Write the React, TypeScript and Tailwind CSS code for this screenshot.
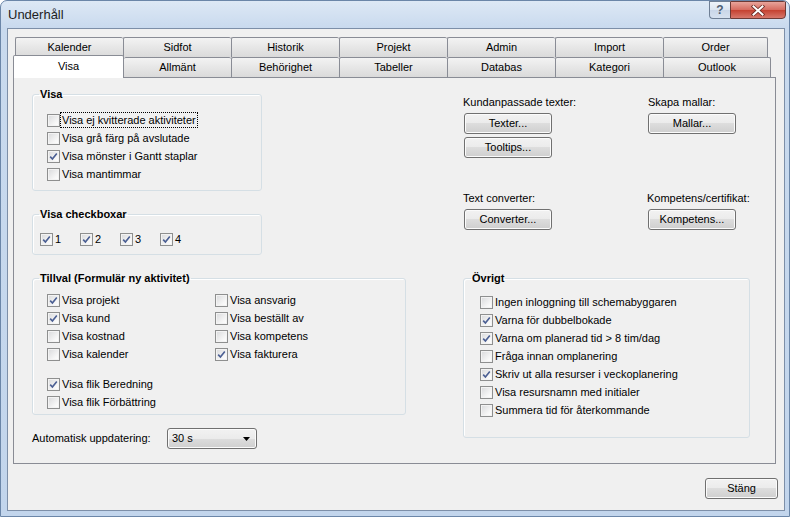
import React from "react";

const btn =
  "h-[21px] border border-[#707070] rounded-[3px] bg-[linear-gradient(#f2f2f2_0%,#ebebeb_50%,#dddddd_50%,#cfcfcf_100%)] shadow-[inset_0_0_0_1px_#fbfbfb] flex items-center justify-center leading-[13px]";

const tabCls =
  "h-[20px] border-t border-l border-[#898c95] rounded-t-[2px] bg-[linear-gradient(#f3f3f3,#dadada)] flex items-center justify-center leading-[13px]";

function Check({ label, checked, focus }: { label: string; checked?: boolean; focus?: boolean }) {
  return (
    <div className="flex items-center h-[18px]">
      <span className="w-[13px] h-[13px] shrink-0 border border-[#8e8f8f] bg-[linear-gradient(135deg,#d8d9db,#f7f7f7_70%,#ffffff)] shadow-[inset_0_0_0_1px_#f3f3f3] flex items-center justify-center">
        {checked && (
          <svg width="9" height="9" viewBox="0 0 9 9">
            <path d="M1.2 4.6 L3.4 7 L7.8 1.4" stroke="#4b5f93" strokeWidth="1.6" fill="none" />
          </svg>
        )}
      </span>
      <span
        className={
          focus
            ? "ml-[1px] px-[1px] leading-[14px] outline outline-1 outline-dotted outline-black"
            : "ml-[1px] px-[1px] leading-[14px]"
        }
      >
        {label}
      </span>
    </div>
  );
}

export default function App() {
  const row1 = [
    { t: "Kalender", w: "w-[108px]" },
    { t: "Sidfot", w: "w-[108px]" },
    { t: "Historik", w: "w-[108px]" },
    { t: "Projekt", w: "w-[108px]" },
    { t: "Admin", w: "w-[108px]" },
    { t: "Import", w: "w-[108px]" },
    { t: "Order", w: "w-[105px]" },
  ];
  const row2 = ["Allmänt", "Behörighet", "Tabeller", "Databas", "Kategori", "Outlook"];

  return (
    <div className="w-[790px] h-[517px] font-['Liberation_Sans',Arial,sans-serif] text-[11px] text-black bg-[linear-gradient(180deg,#dde8f5_0px,#c9daee_27px,#c2d5ec_100%)] rounded-t-[7px] border border-[#6b86a8] flex flex-col overflow-hidden">
      {/* Title bar */}
      <div className="h-[27px] flex items-start shrink-0">
        <div className="flex-1 pl-[7px] pt-[6px] text-[13px] leading-[15px] text-[#1e1e1e]">Underhåll</div>
        <div className="flex mr-[3px]">
          <div className="w-[21px] h-[18px] border border-[#6f7f95] border-r-0 rounded-bl-[4px] bg-[linear-gradient(#eef3f9,#dbe4f0_50%,#c9d6e8_50%,#d6e1ef)] flex items-center justify-center text-[12px] font-bold text-[#4e5d72] leading-none">
            ?
          </div>
          <div className="w-[56px] h-[18px] border border-[#6e3a36] rounded-br-[4px] bg-[linear-gradient(#e8a49b,#d66a5e_50%,#c4402f_50%,#d7776b)] flex items-center justify-center">
            <svg width="14" height="11" viewBox="0 0 14 11">
              <path d="M2.5 1.5 L11.5 9.5 M11.5 1.5 L2.5 9.5" stroke="#6b2a24" strokeWidth="3.6" strokeLinecap="square" />
              <path d="M2.5 1.5 L11.5 9.5 M11.5 1.5 L2.5 9.5" stroke="#ffffff" strokeWidth="2" strokeLinecap="square" />
            </svg>
          </div>
        </div>
      </div>

      {/* Client area */}
      <div className="ml-[6px] mr-[4px] h-[483px] border border-[#7d8fa8] bg-[#f0f0f0] flex flex-col">
        <div className="pl-[5px] pt-[8px]">
          {/* back tab row */}
          <div className="ml-[2px] flex">
            {row1.map((t, i) => (
              <div key={t.t} className={`${tabCls} ${t.w} ${i === row1.length - 1 ? "border-r" : ""}`}>
                {t.t}
              </div>
            ))}
          </div>
          {/* front tab row */}
          <div className="flex items-end h-[20px]">
            <div className="relative z-10 w-[111px] h-[23px] -mb-[1px] border-t border-l border-r border-[#898c95] rounded-t-[2px] bg-white flex items-start justify-center pt-[4px] leading-[13px]">
              Visa
            </div>
            {row2.map((t, i) => (
              <div
                key={t}
                className={`${tabCls} ${i === 0 ? "w-[107px] border-l-0" : "w-[108px]"} ${i === row2.length - 1 ? "border-r" : ""}`}
              >
                {t}
              </div>
            ))}
          </div>

          {/* Tab page */}
          <div className="w-[763px] h-[387px] border border-[#898c95] bg-[#f0f0f0] flex">
            {/* left column */}
            <div className="w-[449px] pl-[18px] pt-[10px] flex flex-col">
              <fieldset className="w-[230px] h-[103px] border border-[#d5dfe5] rounded-[3px] shadow-[inset_1px_1px_0_#ffffff] pl-[6px]">
                <legend className="px-[1px] font-bold leading-[13px]">Visa</legend>
                <div className="pt-[10px] pl-[8px]">
                  <Check label="Visa ej kvitterade aktiviteter" focus />
                  <Check label="Visa grå färg på avslutade" />
                  <Check label="Visa mönster i Gantt staplar" checked />
                  <Check label="Visa mantimmar" />
                </div>
              </fieldset>

              <fieldset className="mt-[17px] w-[230px] h-[47px] border border-[#d5dfe5] rounded-[3px] shadow-[inset_1px_1px_0_#ffffff] pl-[6px]">
                <legend className="px-[1px] font-bold leading-[13px]">Visa checkboxar</legend>
                <div className="pt-[9px] pl-[1px] flex">
                  {["1", "2", "3", "4"].map((n) => (
                    <div key={n} className="w-[40px]">
                      <Check label={n} checked />
                    </div>
                  ))}
                </div>
              </fieldset>

              <fieldset className="mt-[17px] w-[374px] h-[143px] border border-[#d5dfe5] rounded-[3px] shadow-[inset_1px_1px_0_#ffffff] pl-[6px]">
                <legend className="px-[1px] font-bold leading-[13px]">Tillval (Formulär ny aktivitet)</legend>
                <div className="pt-[6px] pl-[8px]">
                  <div className="flex">
                    <div className="w-[168px]">
                      <Check label="Visa projekt" checked />
                      <Check label="Visa kund" checked />
                      <Check label="Visa kostnad" />
                      <Check label="Visa kalender" />
                    </div>
                    <div>
                      <Check label="Visa ansvarig" />
                      <Check label="Visa beställt av" />
                      <Check label="Visa kompetens" />
                      <Check label="Visa fakturera" checked />
                    </div>
                  </div>
                  <div className="mt-[12px]">
                    <Check label="Visa flik Beredning" checked />
                    <Check label="Visa flik Förbättring" />
                  </div>
                </div>
              </fieldset>

              <div className="mt-[13px] flex items-center">
                <span className="w-[135px] leading-[13px]">Automatisk uppdatering:</span>
                <div className="w-[90px] h-[21px] border border-[#707070] rounded-[3px] bg-[linear-gradient(#f2f2f2_0%,#ebebeb_50%,#dddddd_50%,#cfcfcf_100%)] shadow-[inset_0_0_0_1px_#fbfbfb] flex items-center pl-[4px] pr-[6px]">
                  <span className="flex-1 leading-[13px]">30 s</span>
                  <svg width="7" height="4" viewBox="0 0 7 4">
                    <path d="M0 0 H7 L3.5 4 Z" fill="#000000" />
                  </svg>
                </div>
              </div>
            </div>

            {/* right column */}
            <div className="pt-[18px] flex flex-col">
              <div className="flex">
                <div className="w-[185px]">
                  <div className="leading-[13px]">Kundanpassade texter:</div>
                  <div className={`${btn} w-[88px] ml-[1px] mt-[4px]`}>Texter...</div>
                  <div className={`${btn} w-[88px] ml-[1px] mt-[3px]`}>Tooltips...</div>
                </div>
                <div>
                  <div className="leading-[13px]">Skapa mallar:</div>
                  <div className={`${btn} w-[88px] mt-[4px]`}>Mallar...</div>
                </div>
              </div>

              <div className="flex mt-[34px]">
                <div className="w-[184px]">
                  <div className="leading-[13px]">Text converter:</div>
                  <div className={`${btn} w-[88px] ml-[1px] mt-[4px]`}>Converter...</div>
                </div>
                <div>
                  <div className="leading-[13px]">Kompetens/certifikat:</div>
                  <div className={`${btn} w-[88px] ml-[1px] mt-[4px]`}>Kompetens...</div>
                </div>
              </div>

              <fieldset className="mt-[42px] w-[287px] h-[166px] border border-[#d5dfe5] rounded-[3px] shadow-[inset_1px_1px_0_#ffffff] pl-[7px]">
                <legend className="px-[1px] font-bold leading-[13px]">Övrigt</legend>
                <div className="pt-[8px] pl-[9px]">
                  <Check label="Ingen inloggning till schemabyggaren" />
                  <Check label="Varna för dubbelbokade" checked />
                  <Check label="Varna om planerad tid > 8 tim/dag" checked />
                  <Check label="Fråga innan omplanering" />
                  <Check label="Skriv ut alla resurser i veckoplanering" checked />
                  <Check label="Visa resursnamn med initialer" />
                  <Check label="Summera tid för återkommande" />
                </div>
              </fieldset>
            </div>
          </div>
        </div>

        <div className="flex justify-end pr-[6px] mt-[14px]">
          <div className={`${btn} w-[73px]`}>Stäng</div>
        </div>
      </div>
    </div>
  );
}
